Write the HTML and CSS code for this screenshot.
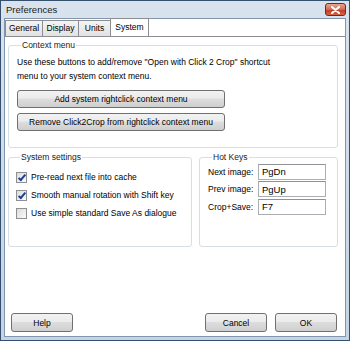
FILE: index.html
```html
<!DOCTYPE html>
<html lang="en">

<head>
  <meta charset="UTF-8">
  <title>Preferences</title>
  <link rel="stylesheet" href="styles.css">
</head>

<body>
  <div class="window">
    <div class="titlebar">
      <span class="title">Preferences</span>
      <span class="close">
        <svg width="9" height="8" viewBox="0 0 9 8">
          <path d="M1 1 L8 7 M8 1 L1 7" stroke="#fff" stroke-width="2" stroke-linecap="round" />
        </svg>
      </span>
    </div>

    <div class="client">
      <div class="tabs">
        <div class="tab tab-general">General</div>
        <div class="tab tab-display">Display</div>
        <div class="tab tab-units">Units</div>
        <div class="tab tab-system active">System</div>
      </div>

      <div class="page">
        <fieldset class="group context">
          <legend>Context menu</legend>
          <p class="info">Use these buttons to add/remove &quot;Open with Click 2 Crop&quot; shortcut<br>menu to your system context menu.</p>
          <button class="btn wide">Add system rightclick context menu</button>
          <button class="btn wide">Remove Click2Crop from rightclick context menu</button>
        </fieldset>

        <div class="row">
          <fieldset class="group settings">
            <legend>System settings</legend>
            <label class="check"><span class="box on"></span>Pre-read next file into cache</label>
            <label class="check"><span class="box on"></span>Smooth manual rotation with Shift key</label>
            <label class="check"><span class="box"></span>Use simple standard Save As dialogue</label>
          </fieldset>

          <fieldset class="group hotkeys">
            <legend>Hot Keys</legend>
            <div class="key"><span>Next image:</span><input type="text" value="PgDn"></div>
            <div class="key"><span>Prev image:</span><input type="text" value="PgUp"></div>
            <div class="key"><span>Crop+Save:</span><input type="text" value="F7"></div>
          </fieldset>
        </div>
      </div>

      <div class="footer">
        <button class="btn">Help</button>
        <span class="spacer"></span>
        <button class="btn">Cancel</button>
        <button class="btn">OK</button>
      </div>
    </div>
  </div>
</body>

</html>
```

FILE: styles.css
```css
body {
  margin: 0;
  font-family: 'Liberation Sans', Arial, sans-serif;
  font-size: 8.5px;
  color: #000;
  white-space: nowrap;
}

.window {
  width: 350px;
  height: 341px;
  box-sizing: border-box;
  border: 1px solid #34506e;
  background: linear-gradient(to bottom, #d9e3ee, #c4d4e4);
  padding: 0 3px 3px;
  display: flex;
  flex-direction: column;
}

.titlebar {
  height: 17px;
  display: flex;
  align-items: flex-start;
  justify-content: space-between;
}

.title {
  font-size: 9.5px;
  margin: 3px 0 0 2px;
  color: #1b1b1b;
}

.close {
  width: 19px;
  height: 11px;
  margin-top: 2px;
  border: 1px solid #6e2a1e;
  border-radius: 3px;
  background: linear-gradient(to bottom, #e9a895, #d26a4f 50%, #c0391d 51%, #d4644a);
  display: flex;
  align-items: center;
  justify-content: center;
}

.client {
  flex: 1;
  background: #fff;
  border: 1px solid #8196ad;
  display: flex;
  flex-direction: column;
}

.tabs {
  display: flex;
  align-items: flex-end;
  height: 17px;
  background: #fff;
}

.tab {
  height: 15px;
  line-height: 15px;
  box-sizing: content-box;
  text-align: center;
  border: 1px solid #8c8e94;
  border-bottom: none;
  margin-right: -1px;
  background: linear-gradient(to bottom, #f4f4f4, #e2e2e2);
}

.tab-general { width: 36px; }
.tab-display { width: 35px; }
.tab-units { width: 31px; }
.tab-system { width: 37px; }

.tab.active {
  height: 18px;
  margin-bottom: -1px;
  background: #fff;
  line-height: 16px;
}

.page {
  border-top: 1px solid #8c8e94;
  padding: 3px 7px 0 3px;
}

.group {
  margin: 0;
  border: 1px solid #d5dfe5;
  border-radius: 3px;
}

.group legend {
  padding: 0 1px;
  margin-left: 4px;
  color: #222;
}

.context {
  padding: 2px 8px 11px;
}

.info {
  margin: 3px 0 7px;
  line-height: 14px;
}

.btn {
  font-family: inherit;
  font-size: 8.5px;
  height: 19px;
  border: 1px solid #707070;
  border-radius: 3px;
  background: linear-gradient(to bottom, #f2f2f2, #ebebeb 45%, #dddddd 50%, #cfcfcf);
  color: #000;
  padding: 0;
}

.wide {
  display: block;
  width: 208px;
  height: 18px;
  margin-bottom: 5px;
}

.row {
  display: flex;
  gap: 7px;
  margin-top: 4px;
}

.settings {
  width: 184px;
  box-sizing: border-box;
  height: 95px;
  padding: 6px 7px 0;
}

.hotkeys {
  flex: 1;
  height: 95px;
  box-sizing: border-box;
  padding: 1px 8px 0;
}

.check {
  display: flex;
  align-items: center;
  height: 18px;
}

.box {
  width: 9px;
  height: 9px;
  border: 1px solid #8f8f8f;
  background: linear-gradient(135deg, #dcdcdc, #fbfbfb);
  margin-right: 4px;
  position: relative;
}

.box.on::after {
  content: "";
  position: absolute;
  left: 3px;
  top: 0;
  width: 2px;
  height: 6px;
  border: solid #1c3f94;
  border-width: 0 2px 2px 0;
  transform: rotate(40deg);
}

.key {
  display: flex;
  align-items: center;
  height: 17.5px;
}

.key span {
  width: 50px;
}

.key input {
  width: 68px;
  height: 16px;
  box-sizing: border-box;
  border: 1px solid #abadb3;
  border-top-color: #8e9196;
  padding: 0 3px;
  font-family: inherit;
  font-size: 9.5px;
}

.footer {
  margin-top: auto;
  display: flex;
  gap: 8px;
  padding: 0 8px 4px 6px;
}

.footer .btn {
  width: 62px;
}

.spacer {
  flex: 1;
}
```
